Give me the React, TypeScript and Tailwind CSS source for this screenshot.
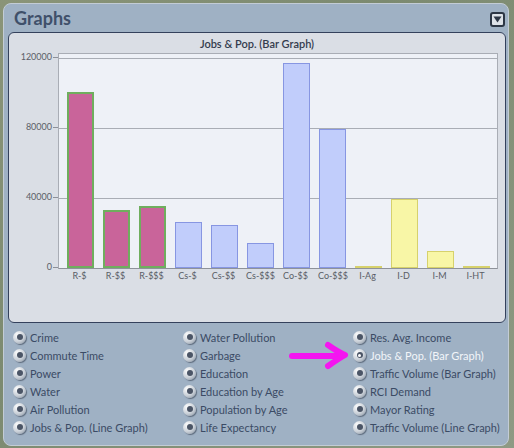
import React from "react"

type Bar = { label: string; h: number; kind: "r" | "c" | "i" }

const bars: Bar[] = [
  { label: "R-$", h: 176, kind: "r" },
  { label: "R-$$", h: 58, kind: "r" },
  { label: "R-$$$", h: 62, kind: "r" },
  { label: "Cs-$", h: 46, kind: "c" },
  { label: "Cs-$$", h: 43, kind: "c" },
  { label: "Cs-$$$", h: 25, kind: "c" },
  { label: "Co-$$", h: 205, kind: "c" },
  { label: "Co-$$$", h: 139, kind: "c" },
  { label: "I-Ag", h: 2, kind: "i" },
  { label: "I-D", h: 69, kind: "i" },
  { label: "I-M", h: 17, kind: "i" },
  { label: "I-HT", h: 2, kind: "i" },
]

const barClass = {
  r: "bg-[#c9649a] border-2 border-[#6fae5e]",
  c: "bg-[#c1cdfb] border border-[#8796e2]",
  i: "bg-[#f8f6a6] border border-[#d6d16c]",
}

const columns = [
  ["Crime", "Commute Time", "Power", "Water", "Air Pollution", "Jobs & Pop. (Line Graph)"],
  ["Water Pollution", "Garbage", "Education", "Education by Age", "Population by Age", "Life Expectancy"],
  ["Res. Avg. Income", "Jobs & Pop. (Bar Graph)", "Traffic Volume (Bar Graph)", "RCI Demand", "Mayor Rating", "Traffic Volume (Line Graph)"],
]

const yTicks = [
  { label: "120000", top: 4 },
  { label: "80000", top: 74 },
  { label: "40000", top: 144 },
  { label: "0", top: 214 },
]

function Radio({ checked }: { checked?: boolean }) {
  return (
    <span className="flex h-[13px] w-[13px] shrink-0 items-center justify-center rounded-full bg-[radial-gradient(circle_at_35%_30%,#ffffff,#c8cfd7_55%,#7d8794)] shadow-[1px_1px_1px_rgba(40,50,65,0.55)]">
      <span className="flex h-[6px] w-[6px] items-center justify-center rounded-full bg-[#4b5566]">
        {checked && <span className="h-[3px] w-[3px] rounded-full bg-white" />}
      </span>
    </span>
  )
}

export default function App() {
  return (
    <div className="h-[448px] w-[514px] overflow-hidden bg-[linear-gradient(135deg,#8a9478,#7c8a70_40%,#8f9a84)] pl-[3px] pt-[3px] font-['Lato',sans-serif]">
      <div className="relative h-[443px] w-[506px] rounded-[8px] border border-[#c3ccd5] bg-[#9fb1c4] pl-[4px] pr-[2px]">
        {/* header */}
        <div className="flex h-[28px] items-center justify-between pl-[6px] pr-[1px]">
          <span className="text-[18px] font-bold leading-none text-[#3f506a]">Graphs</span>
          <span className="mt-[2px] flex h-[15px] w-[15px] items-center justify-center rounded-[3px] border-2 border-[#2c3645] bg-[#dde2e8]">
            <svg width="9" height="7" viewBox="0 0 9 7">
              <path d="M0.5 0.5 L8.5 0.5 L4.5 6.5 Z" fill="#2c3645" />
            </svg>
          </span>
        </div>

        {/* chart card */}
        <div className="h-[291px] rounded-[6px] border border-[#34415c] bg-[#dadee5]">
          <div className="flex h-[20px] items-center justify-center pt-[2px] text-[11px] font-semibold text-[#343c4e]">
            Jobs &amp; Pop. (Bar Graph)
          </div>
          <div className="flex">
            <div className="relative h-[216px] w-[49px] text-[9px] text-[#5b5f68]">
              {yTicks.map((t) => (
                <div key={t.label} className="absolute right-0 flex items-center gap-[1px]" style={{ top: t.top - 5 }}>
                  <span className="leading-[10px]">{t.label}</span>
                  <span className="h-px w-[5px] bg-[#8c9099]" />
                </div>
              ))}
            </div>
            <div className="w-[440px]">
              <div className="relative flex h-[216px] items-end gap-[9px] border border-b-[#8e929a] border-[#a9adb5] bg-[#eef1f7] pl-[8px]">
                <div className="absolute left-0 right-0 top-[4px] h-px bg-[#a9adb5]" />
                <div className="absolute left-0 right-0 top-[74px] h-px bg-[#a9adb5]" />
                <div className="absolute left-0 right-0 top-[144px] h-px bg-[#a9adb5]" />
                {bars.map((b) => (
                  <div
                    key={b.label}
                    className={`relative w-[27px] shrink-0 ${barClass[b.kind]}`}
                    style={{ height: b.h }}
                  />
                ))}
              </div>
              <div className="flex gap-[9px] pl-[8px] pt-[1px]">
                {bars.map((b) => (
                  <span key={b.label} className="w-[27px] shrink-0 text-center text-[9px] leading-[12px] text-[#595d66]">
                    {b.label}
                  </span>
                ))}
              </div>
            </div>
          </div>
        </div>

        {/* radio list */}
        <div className="mt-[5px] grid grid-cols-[170px_170px_160px] pl-[5px]">
          {columns.map((col, ci) => (
            <div key={ci} className="flex flex-col">
              {col.map((item) => {
                const sel = item === "Jobs & Pop. (Bar Graph)"
                return (
                  <div key={item} className="flex h-[18px] items-center gap-[4px]">
                    <Radio checked={sel} />
                    <span className={`whitespace-nowrap text-[11px] leading-none ${sel ? "text-[#f2f5f9]" : "text-[#3b4b65]"}`}>
                      {item}
                    </span>
                  </div>
                )
              })}
            </div>
          ))}
        </div>

        {/* annotation arrow */}
        <svg className="absolute left-[284px] top-[336px]" width="62" height="30" viewBox="0 0 62 30">
          <path d="M4 16 L52 16" stroke="#f415f0" strokeWidth="6" strokeLinecap="round" />
          <path d="M40 5 Q50 12 57 15 Q50 19 40 26" stroke="#f415f0" strokeWidth="6" fill="none" strokeLinecap="round" strokeLinejoin="round" />
        </svg>
      </div>
    </div>
  )
}
